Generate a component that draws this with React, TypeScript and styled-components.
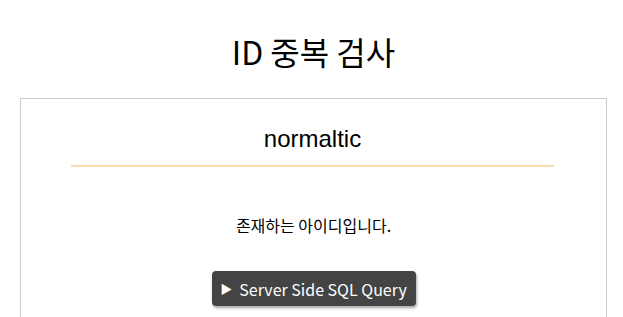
import React from 'react'
import styled, {createGlobalStyle} from 'styled-components'

const GlobalStyle = createGlobalStyle`
  body{
    margin:0;
    background:white;
    font-family:"Noto Sans CJK KR","Noto Sans",sans-serif;
    color:#000;
  }
`
const Page = styled.div`
  padding:0 16px 0 20px;
`
const Title = styled.h1`
  margin:0;
  padding-top:31px;
  height:98px;
  box-sizing:border-box;
  text-align:center;
  font-size:32px;
  font-weight:400;
  line-height:40px;
`
const Card = styled.div`
  border:1px solid #ccc;
  border-bottom:none;
  height:219px;
  display:flex;
  flex-direction:column;
  align-items:center;
`
const IdField = styled.div`
  align-self:stretch;
  margin:24px 52px 0 50px;
  padding-bottom:10px;
  border-bottom:2px solid #f5dcae;
  text-align:center;
  font-family:"Liberation Sans",Arial,sans-serif;
  font-size:24px;
  line-height:32px;
`
const Message = styled.p`
  margin:46px 0 0;
  font-size:16px;
  line-height:24px;
`
const QueryButton = styled.button`
  margin-top:34px;
  width:204px;
  height:35px;
  border:none;
  border-radius:4px;
  background:#444;
  color:white;
  font-family:"Noto Sans CJK KR","Noto Sans",sans-serif;
  font-size:16px;
  display:flex;
  align-items:center;
  justify-content:center;
  gap:7px;
  box-shadow:1px 2px 3px rgba(0,0,0,0.35);
  cursor:pointer;
`
const Arrow = styled.span`
  font-size:12px;
`

function App() {
  return (
    <Page>
      <GlobalStyle/>
      <Title>ID 중복 검사</Title>
      <Card>
        <IdField>normaltic</IdField>
        <Message>존재하는 아이디입니다.</Message>
        <QueryButton><Arrow>▶</Arrow>Server Side SQL Query</QueryButton>
      </Card>
    </Page>
  )
}

export default App
